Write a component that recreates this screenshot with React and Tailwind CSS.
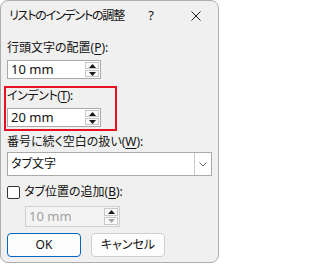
import React from 'react';

const font = "font-['Noto_Sans','Noto_Sans_CJK_JP',sans-serif] [font-feature-settings:'palt']";

const Spin = ({ disabled }) => (
  <div className="flex flex-col gap-[1px] w-[15px] h-full py-[1px] pr-[1px]">
    <div className="flex-1 flex items-center justify-center bg-[#f9f9f9] border border-[#c8c8c8]">
      <svg width="7" height="4" viewBox="0 0 7 4"><path d="M0 4 L3.5 0 L7 4 Z" fill="#1a1a1a" /></svg>
    </div>
    <div className="flex-1 flex items-center justify-center bg-[#f9f9f9] border border-[#c8c8c8]">
      <svg width="7" height="4" viewBox="0 0 7 4"><path d="M0 0 L3.5 4 L7 0 Z" fill={disabled ? '#a8a8a8' : '#1a1a1a'} /></svg>
    </div>
  </div>
);

const NumberBox = ({ value, disabled, className }) => (
  <div
    className={`flex items-stretch border ${
      disabled ? 'border-[#cfcfcf] bg-[#f3f3f3]' : 'border-[#a9a9a9] bg-white'
    } ${className}`}
  >
    <div className={`flex-1 flex items-center pl-[3px] text-[13px] ${disabled ? 'text-[#a0a0a0]' : 'text-[#111]'}`}>
      {value}
    </div>
    <Spin disabled={disabled} />
  </div>
);

const Label = ({ children, k, className = '' }) => (
  <div className={`text-[12px] leading-[16px] text-[#111] whitespace-nowrap ${className}`}>
    {children}(<span className="underline underline-offset-2">{k}</span>):
  </div>
);

export default function App() {
  return (
    <div className={`w-[219px] h-[264px] bg-white ${font}`}>
      <div className="w-[219px] h-[263px] bg-[#f0f0f0] border border-[#adadad] rounded-[8px] flex flex-col">
        <div className="h-[30px] flex items-center pl-[8px] text-[12px] text-[#111]">
          <span className="flex-1 min-w-0 whitespace-nowrap tracking-[-1.2px]">リストのインデントの調整</span>
          <span className="w-[46px] text-[13px] text-center">?</span>
          <span className="w-[44px] flex justify-center">
            <svg width="10" height="10" viewBox="0 0 10 10">
              <path d="M0.5 0.5 L9.5 9.5 M9.5 0.5 L0.5 9.5" stroke="#1a1a1a" strokeWidth="1" />
            </svg>
          </span>
        </div>

        <div className="flex flex-col px-[6px]">
          <Label k="P" className="mt-[9px]">行頭文字の配置</Label>
          <NumberBox value="10 mm" className="mt-[4px] w-[94px] h-[19px]" />

          <div className="mt-[7px] ml-[-3px] w-[113px] h-[45px] border-2 border-[#e81123] flex flex-col pl-[1px]">
            <Label k="T" className="leading-[14px] tracking-[-0.4px]">インデント</Label>
            <NumberBox value="20 mm" className="mt-[4px] w-[94px] h-[19px]" />
          </div>

          <Label k="W" className="mt-[3px]">番号に続く空白の扱い</Label>
          <div className="mt-[2px] w-[205px] h-[24px] flex border border-[#a9a9a9] bg-white">
            <div className="flex-1 flex items-center pl-[3px] text-[12px] text-[#111]">タブ文字</div>
            <div className="w-[17px] flex items-center justify-center border-l border-[#c8c8c8]">
              <svg width="8" height="5" viewBox="0 0 8 5">
                <path d="M0.5 0.5 L4 4 L7.5 0.5" stroke="#666" strokeWidth="1" fill="none" />
              </svg>
            </div>
          </div>

          <div className="mt-[8px] flex items-center gap-[4px]">
            <div className="w-[13px] h-[13px] border border-[#333] rounded-[2px] bg-white"></div>
            <Label k="B">タブ位置の追加</Label>
          </div>
          <NumberBox value="10 mm" disabled className="mt-[6px] ml-[18px] w-[95px] h-[21px]" />

          <div className="mt-[6px] flex gap-[10px]">
            <button className="w-[74px] h-[24px] rounded-[4px] border border-[#0067c0] bg-[#fdfdfd] text-[12px] text-[#111]">
              OK
            </button>
            <button className="w-[74px] h-[24px] rounded-[4px] border border-[#cfcfcf] bg-[#fdfdfd] text-[12px] text-[#111]">
              キャンセル
            </button>
          </div>
        </div>
      </div>
    </div>
  );
}
